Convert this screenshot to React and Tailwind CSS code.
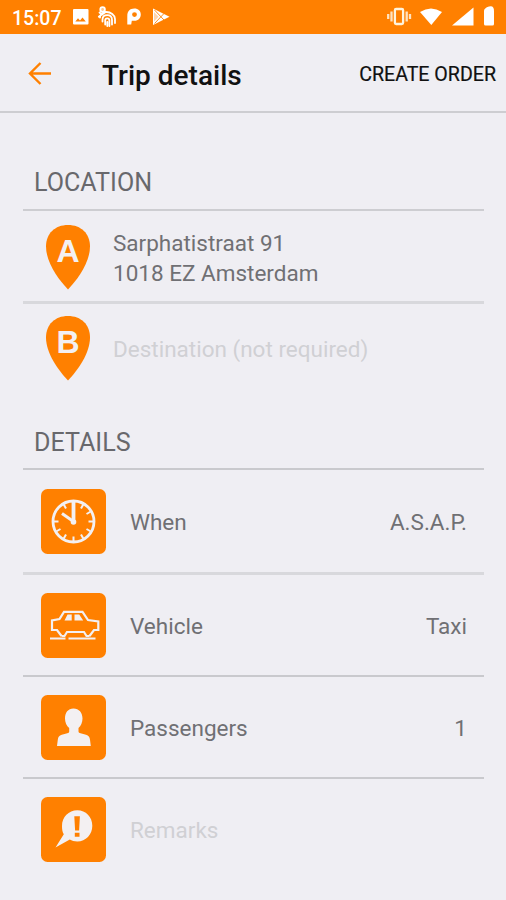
const ORANGE = '#ff8000'
const LIGHT = '#f3f0f2'

function StatusBar() {
  return (
    <div className="h-[34px] shrink-0 bg-[#ff8000] text-white flex items-center justify-between pl-3 pr-[10px]">
      <div className="flex items-center">
        <span className="w-[60px] mt-[3px] text-[19.5px] leading-none font-medium">15:07</span>
        <svg width="100" height="24" viewBox="72 6 100 24" fill="none">
          <path fillRule="evenodd" fill="#fff" d="M74 10h13.500a1 1 0 0 1 1 1v13.500a1 1 0 0 1-1 1h-13.500a1 1 0 0 1-1-1v-13.500a1 1 0 0 1 1-1zM75.300 22.500h10.500l-3.300-4-2.500 3-2-2.200z" />
          <g stroke="#fff" strokeWidth="1.800" strokeLinecap="round">
            <path d="M100 18.500c0-3 2.500-5.500 6.500-5.500s8.500 3 8.500 7v4M102.500 22.500v-2c0-2.800 2-4.300 4.800-4.300 3.200 0 4.700 2 4.700 4.800v4.500M105.200 25.500v-4c0-1.300.8-2.200 2.100-2.200s2.100.9 2.100 2.200v5.500M107.300 23v4M98.800 17.800l2.500-2" />
            <circle cx="102.600" cy="10.500" r="2.300" fill="#ffc48a" />
            <path d="M99.500 13.500l2.500 2 3.500-2.500" />
          </g>
          <path fillRule="evenodd" fill="#fff" d="M127.300 25.500v-8.500c0-4.800 2.600-7.500 7-7.500 4 0 6.500 2.500 6.500 6s-2.500 6.300-6.300 6.300h-2.700l-.6 3.700zM134.500 13.200a2.400 2.400 0 1 0 0 4.800 2.400 2.400 0 0 0 0-4.800z" />
          <path fill="#fff" d="M153 9.500l16.500 8.300L153 26z" />
          <path stroke={ORANGE} strokeWidth="0.900" d="M154.500 11l9.500 10M154.500 24.500l9.500-10" />
          <path fill="#ffd5ab" d="M154 13l4.600 4.800-4.600 4.800z" />
        </svg>
      </div>
      <svg width="110" height="24" viewBox="386 6 110 24" fill="#fff">
        <rect x="394.900" y="10" width="8.200" height="15" rx="1.300" fill="none" stroke="#fff3dc" strokeWidth="2.300" />
        <path d="M388.200 15v5M391.500 12.500v10M406.700 12.500v10M410 15v5" stroke="#ffe3c0" strokeWidth="2.300" />
        <path d="M420 13Q431 6 442 13L431.300 26z" />
        <path d="M473.500 8.500v18h-21.500z" />
        <path d="M484 12q0-3 5-4.500t5 4.500v13q0 1.500-1.500 1.500h-7q-1.500 0-1.500-1.500z" />
      </svg>
    </div>
  )
}

function Header() {
  return (
    <header className="h-[79px] shrink-0 flex items-center border-b-2 border-[#cdcdd1] pl-7 pr-[10px]">
      <svg width="24" height="24" viewBox="0 0 24 24" fill="none" stroke={ORANGE} strokeWidth="2.400">
        <path d="M23 12.500H2M12.500 2L2 12.500 12.500 23" />
      </svg>
      <h1 className="ml-[50px] mt-[6px] text-[28px] leading-8 font-medium text-[#111] whitespace-nowrap">Trip details</h1>
      <button className="ml-auto mt-[5px] text-[19.6px] leading-6 text-[#111] whitespace-nowrap [-webkit-text-stroke:0.2px_#111]">
        CREATE ORDER
      </button>
    </header>
  )
}

function Pin({ letter }) {
  return (
    <svg className="shrink-0" width="44" height="65" viewBox="0 0 44 65">
      <path fill={ORANGE} d="M22 0C9 0 0 8.500 0 21.500c0 16 12.500 33 22 43 9.500-10 22-27 22-43C44 8.500 35 0 22 0z" />
      <text
        x="22"
        y="37"
        textAnchor="middle"
        className="font-['Liberation_Sans',sans-serif] font-bold text-[32px]"
        fill={LIGHT}
      >
        {letter}
      </text>
    </svg>
  )
}

function ClockIcon() {
  return (
    <g fill="none" stroke={LIGHT}>
      <circle cx="32.500" cy="32.500" r="20.500" strokeWidth="2.800" />
      {[30, 60, 90, 120, 150, 180, 210, 240, 270, 330].map((deg) => (
        <path key={deg} d="M32.500 13v4.500" strokeWidth="2" transform={`rotate(${deg} 32.500 32.500)`} />
      ))}
      <path d="M32.500 12v20" strokeWidth="3.800" />
      <path d="M21 24.500l11.500 8" strokeWidth="3" />
      <circle cx="32.500" cy="33" r="2.800" fill={LIGHT} stroke="none" />
    </g>
  )
}

function CarIcon() {
  return (
    <g fill="none" stroke={LIGHT} strokeWidth="2.200">
      <path d="M20.500 43l-4.500-6h-5V27.500l7.500-1.500 4.500-7.200h18.500l5.500 8.200 10.300 1.500v8.500h-4.300l-4.500 6M20.500 43h3l2.500-4h17l2.500 4h3" />
      <path d="M9 45.500h15.500M27.500 45.500h27" strokeWidth="2" />
      <path fill={LIGHT} stroke="none" d="M26.500 21.500h4.200v6h-7.200zM33.500 21.500h4.700l4 6h-8.700z" />
    </g>
  )
}

function PersonIcon() {
  return (
    <path
      fill={LIGHT}
      d="M32.500 13.500c5.500 0 9 4.200 9 10 0 4-1.600 7.300-4 9.500v3.500c0 1 1 1.500 2 1.800l5.500 1.500c2.700.8 3.500 2 4 5l.8 6.200H16l.8-6.200c.4-3 1.300-4.200 4-5l5.500-1.500c1-.3 1.900-.8 1.900-1.800V33c-2.600-2.200-4.200-5.500-4.200-9.500 0-5.800 3-10 8.500-10z"
    />
  )
}

function RemarkIcon() {
  return (
    <g>
      <path
        fill={LIGHT}
        d="M36.300 13.300c8.500 0 15 6.700 15 15.400s-6.500 15.800-15 15.800c-3 0-5.500-.7-7.500-2L14.500 50.500l8.300-13.200c-1.500-2.300-1.800-5-1.800-8.300 0-8.800 6.700-15.700 15.300-15.700z"
      />
      <path fill={ORANGE} d="M33.300 19.300h5.600l-.8 14.200h-4zM33.800 35.700h4.700v4h-4.700z" />
    </g>
  )
}

const ROWS = [
  { label: 'When', value: 'A.S.A.P.', icon: <ClockIcon />, line: 'border-t-2 border-[#c9c9cd] h-[104px] pt-px' },
  { label: 'Vehicle', value: 'Taxi', icon: <CarIcon />, line: 'border-t-3 border-[#d8d8dc] h-[103px]' },
  { label: 'Passengers', value: '1', icon: <PersonIcon />, line: 'border-t-2 border-[#c9c9cd] h-[102px]' },
  { label: 'Remarks', icon: <RemarkIcon />, line: 'border-t-2 border-[#c9c9cd] h-[103px]', muted: true },
]

function DetailRow({ label, value, icon, line, muted }) {
  return (
    <div className={`flex items-center pl-[18px] pr-[17px] ${line}`}>
      <svg className="shrink-0" width="65" height="65" viewBox="0 0 65 65">
        <rect width="65" height="65" rx="6.500" fill={ORANGE} />
        {icon}
      </svg>
      <span className={`ml-6 mt-px ${muted ? 'text-[#d0d0d4]' : ''}`}>{label}</span>
      {value && <span className="ml-auto mt-px">{value}</span>}
    </div>
  )
}

export default function App() {
  return (
    <div className="w-[506px] h-[900px] overflow-hidden flex flex-col bg-[#efeef3] font-[Roboto,sans-serif] text-[#707074] text-[22.5px] leading-[30px]">
      <StatusBar />
      <Header />
      <main className="pl-[23px] pr-[22px]">
        <h2 className="h-[96px] pt-[55px] pl-[11px] text-[25.1px] text-[#68686c]">LOCATION</h2>
        <div className="h-[92px] border-t-2 border-[#cdcdd1] flex items-start pt-[14px] pl-[23px]">
          <Pin letter="A" />
          <p className="ml-[23px] mt-[3px]">
            Sarphatistraat 91
            <br />
            1018 EZ Amsterdam
          </p>
        </div>
        <div className="h-[92px] border-t-3 border-[#d8d8dc] flex items-start pt-[12px] pl-[23px]">
          <Pin letter="B" />
          <p className="ml-[23px] mt-[18px] text-[#d0d0d4]">Destination (not required)</p>
        </div>
        <h2 className="h-[75px] pt-[35px] pl-[11px] text-[25.1px] text-[#68686c]">DETAILS</h2>
        {ROWS.map((row) => (
          <DetailRow key={row.label} {...row} />
        ))}
      </main>
    </div>
  )
}
